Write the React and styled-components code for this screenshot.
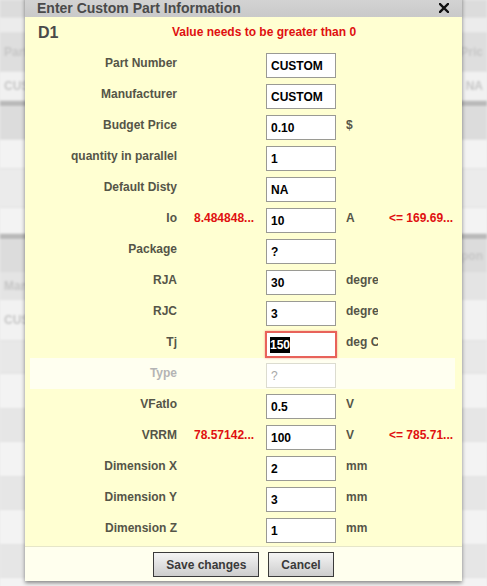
import React from "react";
import styled, { createGlobalStyle } from "styled-components";

const GlobalStyle = createGlobalStyle`
  html, body {
    margin: 0;
    padding: 0;
  }
  body {
    font-family: "Liberation Sans", Arial, sans-serif;
    background: #e9e9e9;
    overflow: hidden;
  }
`;

const rows = [
  { label: "Part Number", value: "CUSTOM" },
  { label: "Manufacturer", value: "CUSTOM" },
  { label: "Budget Price", value: "0.10", unit: "$" },
  { label: "quantity in parallel", value: "1" },
  { label: "Default Disty", value: "NA" },
  { label: "Io", min: "8.484848...", value: "10", unit: "A", max: "<= 169.69..." },
  { label: "Package", value: "?" },
  { label: "RJA", value: "30", unit: "degrees C/W" },
  { label: "RJC", value: "3", unit: "degrees C/W" },
  { label: "Tj", value: "150", unit: "deg C", focused: true },
  { label: "Type", value: "?", disabled: true },
  { label: "VFatIo", value: "0.5", unit: "V" },
  { label: "VRRM", min: "78.57142...", value: "100", unit: "V", max: "<= 785.71..." },
  { label: "Dimension X", value: "2", unit: "mm" },
  { label: "Dimension Y", value: "3", unit: "mm" },
  { label: "Dimension Z", value: "1", unit: "mm" },
];

// faded application behind the modal
const bands = [
  { h: 17, c: "#dcdcdc" },
  { h: 14, c: "#ececec" },
  { h: 38, c: "#dedede", text: "Part", right: "Pric" },
  { h: 28, c: "#f1f1f1", text: "CUSTOM", right: "NA" },
  { h: 5, c: "#b9b9b9" },
  { h: 32, c: "#dcdcdc" },
  { h: 28, c: "#f3f3f3" },
  { h: 38, c: "#ebebeb" },
  { h: 25, c: "#f3f3f3" },
  { h: 5, c: "#b9b9b9" },
  { h: 32, c: "#dcdcdc", right: "npon" },
  { h: 26, c: "#e4e4e4", text: "Manuf" },
  { h: 40, c: "#f2f2f2", text: "CUSTOM" },
  { h: 32, c: "#e8e8e8" },
  { h: 34, c: "#f3f3f3" },
  { h: 32, c: "#e6e6e6" },
  { h: 34, c: "#f3f3f3" },
  { h: 32, c: "#e6e6e6" },
  { h: 34, c: "#f3f3f3" },
  { h: 32, c: "#e6e6e6" },
  { h: 34, c: "#f3f3f3" },
  { h: 32, c: "#e6e6e6" },
];

const Page = styled.div`
  position: relative;
  width: 487px;
  height: 586px;
  overflow: hidden;
`;

const Backdrop = styled.div`
  display: flex;
  flex-direction: column;
  filter: blur(0.9px);
`;

const Band = styled.div`
  height: ${(p) => p.$h}px;
  background: ${(p) => p.$c};
  display: flex;
  align-items: center;
  justify-content: space-between;
  padding: 0 4px;
  font-size: 12px;
  font-weight: bold;
  color: #c6c6c6;
  border-bottom: 1px solid #e2e2e2;
`;

const Dialog = styled.div`
  position: absolute;
  left: 25px;
  top: -5px;
  width: 437px;
  display: flex;
  flex-direction: column;
  box-shadow: 0 2px 4px rgba(0, 0, 0, 0.45);
`;

const TitleBar = styled.div`
  height: 22px;
  background: linear-gradient(#d6d6d6, #c9c9c9);
  display: flex;
  align-items: flex-end;
  justify-content: space-between;
  padding: 0 12px 1px 12px;
  font-size: 14px;
  font-weight: bold;
  color: #4a4a4a;
  box-sizing: border-box;
`;

const Close = styled.svg`
  width: 10px;
  height: 10px;
  margin-bottom: 3px;
  margin-right: 1px;
`;

const Body = styled.div`
  background: #ffffd2;
  padding-bottom: 2px;
`;

const Header = styled.div`
  height: 31px;
  display: flex;
  align-items: center;
  padding: 0 13px;
`;

const PartName = styled.div`
  font-size: 16px;
  font-weight: bold;
  color: #4a4a4a;
  width: 134px;
`;

const ErrorText = styled.div`
  font-size: 12px;
  font-weight: bold;
  color: #e01010;
  margin-top: -1px;
`;

const Row = styled.div`
  display: grid;
  grid-template-columns: 147px 89px 80px 43px 1fr;
  height: 31px;
  margin: 0 7px 0 5px;
  background: ${(p) => (p.$disabled ? "#fffff0" : "transparent")};
`;

const Label = styled.div`
  text-align: right;
  font-size: 12px;
  font-weight: bold;
  color: ${(p) => (p.$disabled ? "#b4b4b4" : "#555548")};
  padding-top: 8px;
  white-space: nowrap;
`;

const MinLimit = styled.div`
  font-size: 12px;
  font-weight: bold;
  color: #e01010;
  padding-top: 8px;
  padding-left: 17px;
  white-space: nowrap;
  overflow: hidden;
`;

const MaxLimit = styled.div`
  font-size: 12px;
  font-weight: bold;
  color: #e01010;
  padding-top: 8px;
  white-space: nowrap;
`;

const Input = styled.input`
  width: 70px;
  height: 25px;
  box-sizing: border-box;
  margin: 5px 0 0 0;
  border: 1px solid ${(p) => (p.disabled ? "#dcdcd0" : "#9a9a94")};
  background: #ffffff;
  font-family: "Liberation Sans", Arial, sans-serif;
  font-size: 12px;
  font-weight: bold;
  color: ${(p) => (p.disabled ? "#a8a8a8" : "#000")};
  padding: 0 0 0 4px;
  outline: none;
  &:disabled {
    font-weight: normal;
    background: #fff;
  }
`;

const FocusedField = styled.div`
  width: 72px;
  height: 27px;
  box-sizing: border-box;
  margin: 4px 0 0 -1px;
  border: 2px solid #e8625a;
  box-shadow: 0 0 2px rgba(232, 98, 90, 0.6);
  background: #fff;
  font-size: 12px;
  font-weight: bold;
  padding: 5px 0 0 3px;
`;

const Selected = styled.span`
  background: #000;
  color: #fff;
  padding: 1px 0;
`;

const Unit = styled.div`
  font-size: 12px;
  font-weight: bold;
  color: #555548;
  padding-top: 8px;
  width: 32px;
  white-space: nowrap;
  overflow: hidden;
`;

const Footer = styled.div`
  height: 34px;
  background: #ffffee;
  border-top: 1px solid #e6e6c8;
  display: flex;
  align-items: center;
  justify-content: center;
  gap: 9px;
`;

const Button = styled.button`
  height: 25px;
  padding: 0 12px;
  border: 1px solid #3a3a3a;
  background: linear-gradient(#f4f4f4, #cdcdcd);
  font-family: "Liberation Sans", Arial, sans-serif;
  font-size: 12px;
  font-weight: bold;
  color: #3a3a3a;
  cursor: pointer;
  margin-top: 1px;
`;

export default function App() {
  return (
    <Page>
      <GlobalStyle />
      <Backdrop>
        {bands.map((b, i) => (
          <Band key={i} $h={b.h} $c={b.c}>
            <span>{b.text}</span>
            <span>{b.right}</span>
          </Band>
        ))}
      </Backdrop>

      <Dialog>
        <TitleBar>
          <span>Enter Custom Part Information</span>
          <Close viewBox="0 0 10 10">
            <path d="M1 1 L9 9 M9 1 L1 9" stroke="#111" strokeWidth="2.4" strokeLinecap="square" />
          </Close>
        </TitleBar>
        <Body>
          <Header>
            <PartName>D1</PartName>
            <ErrorText>Value needs to be greater than 0</ErrorText>
          </Header>
          {rows.map((r) => (
            <Row key={r.label} $disabled={r.disabled}>
              <Label $disabled={r.disabled}>{r.label}</Label>
              <MinLimit>{r.min}</MinLimit>
              <div>
                {r.focused ? (
                  <FocusedField>
                    <Selected>{r.value}</Selected>
                  </FocusedField>
                ) : (
                  <Input readOnly value={r.value} disabled={r.disabled} />
                )}
              </div>
              <Unit>{r.unit}</Unit>
              <MaxLimit>{r.max}</MaxLimit>
            </Row>
          ))}
        </Body>
        <Footer>
          <Button>Save changes</Button>
          <Button>Cancel</Button>
        </Footer>
      </Dialog>
    </Page>
  );
}
